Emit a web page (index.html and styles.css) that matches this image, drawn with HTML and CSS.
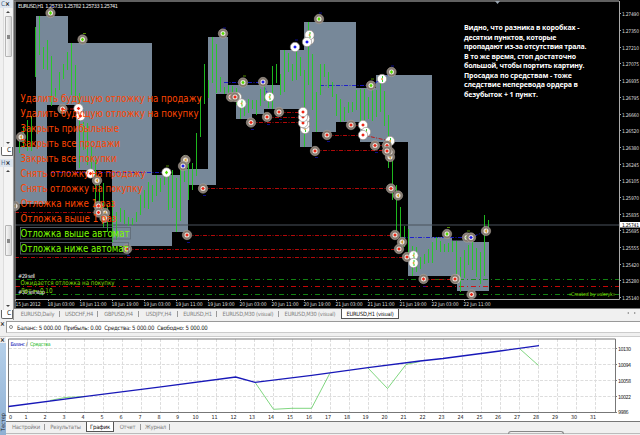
FILE: index.html
```html
<!DOCTYPE html>
<html lang="ru">
<head>
    <meta charset="utf-8">
    <title>EURUSD,H1</title>
    <link rel="stylesheet" href="styles.css">
</head>
<body>
    <div class="workspace">
        <div class="dock">
            <div class="panel panel-top">
                <div class="panel-head"><span>С</span><b>×</b></div>
                <div class="scroll"><i class="up"></i><i class="thumb"></i><i class="down"></i></div>
                <div class="panel-tab">С</div>
            </div>
            <div class="panel panel-bottom">
                <div class="panel-head"><span>Н</span><b>×</b></div>
                <div class="scroll"><i class="up"></i><i class="thumb"></i><i class="down"></i></div>
                <div class="panel-tab">С</div>
            </div>
        </div>

        <div class="charts">
            <svg class="price-chart" viewBox="14 0 626 308">
                <defs>
                    <g id="ring"><circle r="4.7" fill="#857a70" stroke="#b3aaa2" stroke-width=".5"/><circle r="2.5" fill="#e8e2dc"/></g>
                    <g id="disc"><circle r="4.7" fill="#fff" stroke="#887f78" stroke-width=".6"/></g>
                    <g id="g"><use href="#ring"/><path class="dot lime" d="M0-2L1.6 0 0 2-1.6 0z"/></g>
                    <g id="r"><use href="#ring"/><path class="dot red" d="M0-1.8L1.8 0 0 1.8-1.8 0z"/></g>
                    <g id="y"><use href="#ring"/><path class="dot gold" d="M-1.4 0L1-2V2z"/></g>
                    <g id="b"><use href="#ring"/><path class="dot blue" d="M0-1.8L1.8 0 0 1.8-1.8 0z"/></g>
                    <g id="wr"><use href="#disc"/><path class="dot red" d="M0-1.8L1.8 0 0 1.8-1.8 0z"/></g>
                    <g id="wo"><use href="#disc"/><path class="dot gold" d="M-1.2 0L.8-1.8V1.8z"/><path class="bars" d="M.5-3V-1M.5 1V3"/></g>
                    <g id="wb"><use href="#disc"/><path class="dot blue" d="M0-1.8L1.8 0 0 1.8-1.8 0z"/></g>
                    <g id="wg"><use href="#disc"/><path class="dot lime" d="M0-2L1.6 0 0 2-1.6 0z"/></g>
                </defs>

                <rect x="14" y="0" width="626" height="308"/>

                <!-- session boxes -->
                <g class="boxes">
                    <path d="M15 147H36V16H68V43H152V170H76V105H47V204H15z"/>
                    <path d="M112 170H152V175H180V169H208V37H228V85H280V50H304V22H356V88H376V75H432V237H452V240.500H472V242H489V291H457V276H408V142H360V122H336V132H312V147H300V109H264V114H252V119H236V94H216V185H188V232H172V246H112z"/>
                </g>

                <path class="cursor-line" d="M15 225H619"/>
                <path class="level red-level" d="M15 286.500H619"/>
                <path class="level green-level" d="M15 279.500H619M15 294.500H619"/>
                <path class="level trade" d="M15 257.500H407M127 249.500H399M187 235.500H395M203 188.500H391M315 150.500H387M251 122.500H303M267 117.500H303M279 112.500H303M327 135.500H363M351 125.500H363M15 212.500H98M62 109H78M423 279.500H455M363 135L390 141M375 145.500H387"/>
                <path class="level blue-level" d="M51 172.500H166M224 82.500H263L269 97M320 85.500H371L391 73M402 237.500H471L486 231"/>

                <!-- price bars -->
                <path class="bars" d="M35.500 27V77M39.500 16V55M43.500 47V69M47.500 40V70M51.500 56V106M55.500 88V97M59.500 72V90M63.500 64V79M67.500 52V70M71.500 43V95M75.500 65V100M79.500 93V168M83.500 122V150M87.500 123V165M91.500 147V170M95.500 160V205M99.500 180V215M103.500 183V228M107.500 205V232M112.500 200V243M116.500 212V240M120.500 208V222M124.500 210V224M128.500 217V226M132.500 218V225M136.500 212V222M140.500 195V215M144.500 190V208M148.500 182V209M152.500 185V202M156.500 175V196M160.500 178V192M164.500 170V185M168.500 175V210M172.500 170V208M176.500 178V232M180.500 165V221M184.500 155V182M188.500 160V200M192.500 163V190M196.500 133V176M200.500 97V137M204.500 64V104M208.500 80V98M212.500 37V83M216.500 44V93M220.500 77V92M224.500 87V94M228.500 85V94M232.500 86V96M236.500 88V105M240.500 96V119M244.500 102V116M248.500 99V113M252.500 100V109M256.500 100V115M260.500 89V106M264.500 84V101M268.500 93V108M272.500 66V109M276.500 64V83M280.500 74V95M284.500 50V92M288.500 53V72M292.500 64V81M296.500 50V80M300.500 57V76M304.500 70V147M308.500 22V85M312.500 54V110M316.500 92V132M320.500 64V95M324.500 64V77M328.500 72V88M332.500 82V97M336.500 94V116M340.500 99V122M344.500 107V121M348.500 102V113M352.500 102V112M356.500 90V110M360.500 89V122M364.500 89V128M368.500 97V119M372.500 89V121M376.500 90V117M380.500 80V112M384.500 91V126M388.500 115V168M392.500 158V200M396.500 185V235M400.500 207V250M404.500 226V247M408.500 229V260M412.500 246V276M416.500 247V272M420.500 257V269M424.500 254V264M428.500 249V263M432.500 242V263M436.500 237V250M440.500 241V252M444.500 244V252M448.500 243V252M452.500 241V252M456.500 241V279M460.500 257V292M464.500 250V278M468.500 245V265M472.500 241V270M476.500 248V277M480.500 252V284M484.500 215V276M488.500 220V227"/>
                <path class="bars" d="M19.500 133V153M23.500 126V148M27.500 120V151M31.500 116V151"/>

                <!-- order markers -->
                <use href="#g" x="50.500" y="13"/><use href="#g" x="82.500" y="39.500"/>
                <use href="#r" x="62.500" y="109"/><use href="#wr" x="80.500" y="116"/><use href="#wr" x="78.500" y="108.500"/>
                <use href="#y" x="21" y="137"/><use href="#wr" x="90.500" y="173.500"/><use href="#y" x="97" y="180.500"/>
                <use href="#wg" x="166.500" y="172.500"/><use href="#y" x="185.500" y="160"/><use href="#b" x="183" y="166"/>
                <use href="#r" x="203" y="188.500"/><use href="#y" x="15" y="206"/><use href="#y" x="105" y="213"/><use href="#y" x="104.500" y="218"/>
                <use href="#r" x="98.500" y="206"/><use href="#r" x="98.500" y="212.500"/><use href="#r" x="127" y="249"/><use href="#r" x="187" y="235"/>
                <use href="#g" x="223" y="33.500"/><use href="#g" x="243" y="82.500"/><use href="#b" x="263" y="82"/>
                <use href="#wr" x="237" y="97"/><use href="#r" x="231" y="97"/><use href="#r" x="235" y="97"/>
                <use href="#wo" x="241.500" y="103.500"/><use href="#wo" x="269.500" y="97"/>
                <use href="#wb" x="295" y="47"/><use href="#wo" x="309.500" y="40"/><use href="#wo" x="309.500" y="35"/><use href="#wb" x="307" y="42"/>
                <use href="#g" x="319" y="19"/><use href="#g" x="371" y="85.500"/><use href="#wo" x="382" y="79"/><use href="#g" x="391.500" y="72"/>
                <use href="#r" x="279" y="112"/><use href="#r" x="267" y="117"/><use href="#r" x="251" y="122.500"/>
                <use href="#wo" x="305" y="129"/><use href="#wo" x="305" y="124"/><use href="#wo" x="305" y="118.500"/><use href="#wr" x="303" y="123"/><use href="#wr" x="303" y="117"/><use href="#wr" x="303" y="112"/>
                <use href="#r" x="315" y="151"/><use href="#r" x="327" y="135"/><use href="#r" x="351" y="125"/>
                <use href="#wr" x="363" y="125"/><use href="#wo" x="366" y="132"/><use href="#wr" x="363" y="135"/>
                <use href="#r" x="375" y="145.500"/><use href="#wo" x="390" y="141"/><use href="#y" x="390" y="157"/><use href="#y" x="390" y="152"/><use href="#r" x="387" y="145.500"/><use href="#r" x="387" y="151"/>
                <use href="#r" x="391" y="188.500"/><use href="#y" x="398" y="195.500"/>
                <use href="#r" x="395" y="235"/><use href="#y" x="402" y="242"/><use href="#r" x="399" y="249"/><use href="#r" x="407" y="257"/>
                <use href="#wo" x="413.500" y="255.500"/><use href="#wo" x="413.500" y="263"/>
                <use href="#g" x="447" y="234"/><use href="#g" x="467" y="237.500"/><use href="#b" x="471" y="237.500"/><use href="#y" x="486" y="231"/>
                <use href="#r" x="423.500" y="279"/><use href="#wr" x="456" y="279"/><use href="#r" x="455" y="279"/><use href="#r" x="471.500" y="294.500"/>

                <path class="tick-blue" d="M51 6.500h3M223 28h3M319 13h3M295 40h3M391 66h3M203 195.500h3M187 242.500h3M127 255.500h3M251 129.500h3M267 124.500h3M279 119.500h3M315 157.500h3M327 141.500h3M375 152.500h3M423 286.500h3"/>
                <path class="tick-lime" d="M83 33.500h3M243 76h3M447 227.500h3M467 231h3M371 79h3M166 166h3"/>

                <text class="caption" x="18" y="7.500" textLength="100">EURUSD,H1&#160; 1.25733 1.25782 1.25733 1.25741</text>

                <!-- order script buttons -->
                <g class="orders">
                    <text x="20.500" y="101.500" textLength="181" lengthAdjust="spacingAndGlyphs">Удалить будущую отложку на продажу</text>
                    <text x="20.500" y="116.500" textLength="178" lengthAdjust="spacingAndGlyphs">Удалить будущую отложку на покупку</text>
                    <text x="20.500" y="131.500" textLength="98.500" lengthAdjust="spacingAndGlyphs">Закрыть прибыльные</text>
                    <text x="20.500" y="146.500" textLength="99.500" lengthAdjust="spacingAndGlyphs">Закрыть все продажи</text>
                    <text x="20.500" y="161.500" textLength="96" lengthAdjust="spacingAndGlyphs">Закрыть все покупки</text>
                    <text x="20.500" y="176.500" textLength="125" lengthAdjust="spacingAndGlyphs">Снять отложку на продажу</text>
                    <text x="20.500" y="191.500" textLength="122" lengthAdjust="spacingAndGlyphs">Снять отложку на покупку</text>
                    <text x="20.500" y="206.500" textLength="95" lengthAdjust="spacingAndGlyphs">Отложка ниже 1 раз</text>
                    <text x="20.500" y="221.500" textLength="96" lengthAdjust="spacingAndGlyphs">Отложка выше 1 раз</text>
                </g>
                <rect class="frame" x="20.500" y="227.500" width="110" height="11.500"/>
                <rect class="frame" x="20.500" y="242.500" width="108" height="11.500"/>
                <g class="orders active">
                    <text x="20.500" y="236.500" textLength="109" lengthAdjust="spacingAndGlyphs">Отложка выше автомат</text>
                    <text x="20.500" y="251.500" textLength="108" lengthAdjust="spacingAndGlyphs">Отложка ниже автомат</text>
                </g>
                <text class="caption" x="18" y="278" textLength="17">#29 sell</text>
                <text class="caption" x="18" y="293.500" textLength="27">#30 sell stop</text>
                <text class="status" x="20.500" y="285" textLength="94" lengthAdjust="spacingAndGlyphs">Ожидается отложка на покупку</text>
                <text class="status" x="20.500" y="292.500" textLength="32" lengthAdjust="spacingAndGlyphs">Лот = 0.10</text>
                <text class="status author" x="568.500" y="296" textLength="47">«Created by valeryk»</text>

                <g class="note">
                    <text x="464" y="30" textLength="115.500">Видно, что разника в коробках -</text>
                    <text x="464" y="39.600" textLength="92.500">десятки пунктов, которые</text>
                    <text x="464" y="49.200" textLength="122.500">пропадают из-за отсутствия трала.</text>
                    <text x="464" y="58.800" textLength="112">В то же время, стоп достаточно</text>
                    <text x="464" y="68.200" textLength="120.500">большой, чтобы портить картину.</text>
                    <text x="464" y="77.800" textLength="108">Просадка по средствам - тоже</text>
                    <text x="464" y="87.300" textLength="114">следствие неперевода ордера в</text>
                    <text x="464" y="96.800" textLength="74">безубыток + 1 пункт.</text>
                </g>

                <!-- axes -->
                <path class="edge" d="M14 1H619M15 1V308"/>
                <path class="axis" d="M619.500 1V299.500M15 299.500H619.500"/>
                <path class="shift" d="M495 1h5l-2.500 3z"/>
                <path class="axis" d="M619 13.500h2M619 30.500h2M619 47.500h2M619 63.500h2M619 80.500h2M619 97.500h2M619 114.500h2M619 130.500h2M619 147.500h2M619 164.500h2M619 180.500h2M619 197.500h2M619 214.500h2M619 230.500h2M619 247.500h2M619 264.500h2M619 280.500h2M619 297.500h2"/>
                <path class="axis" d="M15.500 299v2M48.500 299v2M80.500 299v2M112.500 299v2M144.500 299v2M176.500 299v2M208.500 299v2M240.500 299v2M272.500 299v2M304.500 299v2M336.500 299v2M368.500 299v2M400.500 299v2M432.500 299v2M464.500 299v2"/>
                <g class="scale">
                    <text x="622" y="15.500" textLength="17">1.27490</text>
                    <text x="622" y="32.500" textLength="17">1.27350</text>
                    <text x="622" y="49.500" textLength="17">1.27210</text>
                    <text x="622" y="66" textLength="17">1.27075</text>
                    <text x="622" y="82.500" textLength="17">1.26935</text>
                    <text x="622" y="99.500" textLength="17">1.26795</text>
                    <text x="622" y="116.500" textLength="17">1.26660</text>
                    <text x="622" y="132.500" textLength="17">1.26520</text>
                    <text x="622" y="149.500" textLength="17">1.26380</text>
                    <text x="622" y="166.500" textLength="17">1.26245</text>
                    <text x="622" y="182.500" textLength="17">1.26105</text>
                    <text x="622" y="199.500" textLength="17">1.25970</text>
                    <text x="622" y="216.500" textLength="17">1.25835</text>
                    <text x="622" y="232.500" textLength="17">1.25695</text>
                    <text x="622" y="249.500" textLength="17">1.25555</text>
                    <text x="622" y="266.500" textLength="17">1.25420</text>
                    <text x="622" y="282.500" textLength="17">1.25280</text>
                    <text x="622" y="299.500" textLength="17">1.25140</text>
                    <rect x="620" y="222" width="20" height="5.500" fill="#fff"/>
                    <text class="current" x="622" y="227" textLength="17">1.25741</text>
                </g>
                <g class="scale">
                    <text x="15.500" y="305.500" textLength="25">15 Jun 2012</text>
                    <text x="47.500" y="305.500" textLength="27">18 Jun 03:00</text>
                    <text x="79.500" y="305.500" textLength="27">18 Jun 11:00</text>
                    <text x="111.500" y="305.500" textLength="27">18 Jun 19:00</text>
                    <text x="143.500" y="305.500" textLength="27">19 Jun 03:00</text>
                    <text x="175.500" y="305.500" textLength="27">19 Jun 11:00</text>
                    <text x="207.500" y="305.500" textLength="27">19 Jun 19:00</text>
                    <text x="239.500" y="305.500" textLength="27">20 Jun 03:00</text>
                    <text x="271.500" y="305.500" textLength="27">20 Jun 11:00</text>
                    <text x="303.500" y="305.500" textLength="27">20 Jun 19:00</text>
                    <text x="335.500" y="305.500" textLength="27">21 Jun 03:00</text>
                    <text x="367.500" y="305.500" textLength="27">21 Jun 11:00</text>
                    <text x="399.500" y="305.500" textLength="27">21 Jun 19:00</text>
                    <text x="431.500" y="305.500" textLength="27">22 Jun 03:00</text>
                    <text x="463.500" y="305.500" textLength="27">22 Jun 11:00</text>
                </g>
            </svg>

            <div class="chart-tabs">
                <span class="tab t1">EURUSD,Daily</span>
                <span class="tab t2">USDCHF,H4</span>
                <span class="tab t3">GBPUSD,H4</span>
                <span class="tab t4">USDJPY,H4</span>
                <span class="tab t5">EURUSD,H1</span>
                <span class="tab t6">EURUSD,M30 (visual)</span>
                <span class="tab t6 last">EURUSD,M30 (visual)</span>
                <span class="tab t7 current">EURUSD,H1 (visual)</span>
                <span class="arrows"><i class="prev"></i><i class="next"></i></span>
            </div>
        </div>
    </div>

    <div class="terminal">
        <b class="close">×</b>
        <div class="balance"><i></i><span>Баланс: 5 000.00&nbsp; Прибыль: 0.00&nbsp; Средства: 5 000.00&nbsp; Свободно: 5 000.00</span></div>
    </div>

    <div class="tester">
        <div class="tester-side"><b class="close">×</b><span>Тестер</span></div>
        <div class="tester-body">
            <svg class="equity-chart" viewBox="6 337 634 84">
                <rect class="plot" x="6" y="337" width="634" height="84"/>
                <path class="grid" d="M27.500 339V412M46.500 339V412M65.500 339V412M84.500 339V412M103.500 339V412M122.500 339V412M141.500 339V412M160.500 339V412M178.500 339V412M197.500 339V412M216.500 339V412M235.500 339V412M254.500 339V412M273.500 339V412M292.500 339V412M311.500 339V412M330.500 339V412M349.500 339V412M368.500 339V412M387.500 339V412M405.500 339V412M424.500 339V412M443.500 339V412M462.500 339V412M481.500 339V412M500.500 339V412M519.500 339V412M538.500 339V412M557.500 339V412M576.500 339V412M595.500 339V412M9 348.500H615M9 364.500H615M9 380.500H615M9 396.500H615"/>
                <path class="plot-frame" d="M8.500 339H615.500V412.500H8.500z"/>
                <path class="plot-tick" d="M615 348.500h2M615 364.500h2M615 380.500h2M615 396.500h2M615 412.500h2"/>
                <path class="equity" d="M50 400.500L65 397.500 84 396.600M255 382.300L273.500 409.300 292 408.300H311.500L330 373M368 368L387.500 388.500 406 364.500 420 361.500M520 349L538.500 365.500"/>
                <path class="balance-line" d="M8.500 406.500L84 396.700 159 387.200 235.700 377 255 382.300 311.700 375.300 368 367.700 420 361 443 358.500 500 351 539 345.700"/>
                <text class="legend-balance" x="10.500" y="345.500" textLength="14.500">Баланс</text>
                <text class="legend" x="26" y="345.500">/</text>
                <text class="legend-equity" x="30" y="345.500" textLength="20.500">Средства</text>
                <g class="legend">
                    <text x="9" y="419">0</text><text x="24.500" y="419">1</text><text x="43.500" y="419">2</text><text x="62.500" y="419">3</text>
                    <text x="81.500" y="419">4</text><text x="100.500" y="419">5</text><text x="119.500" y="419">6</text><text x="138.500" y="419">7</text>
                    <text x="157.500" y="419">8</text><text x="176" y="419">9</text><text x="192.500" y="419">10</text><text x="211.500" y="419">11</text>
                    <text x="230.500" y="419">12</text><text x="249" y="419">13</text><text x="268" y="419">14</text><text x="287" y="419">15</text>
                    <text x="306" y="419">16</text><text x="325" y="419">17</text><text x="344" y="419">18</text><text x="362.500" y="419">19</text>
                    <text x="381.500" y="419">20</text><text x="400.500" y="419">21</text><text x="419.500" y="419">22</text><text x="438.500" y="419">23</text>
                    <text x="457.500" y="419">24</text><text x="476.500" y="419">25</text><text x="495" y="419">26</text><text x="514" y="419">27</text>
                    <text x="533" y="419">28</text><text x="552" y="419">29</text><text x="571" y="419">30</text><text x="590" y="419">31</text>
                    <text x="618" y="350.500" textLength="13">10130</text><text x="618" y="366.500" textLength="13">10094</text>
                    <text x="618" y="382.500" textLength="13">10058</text><text x="618" y="398.500" textLength="13">10022</text>
                    <text x="618" y="414" textLength="10.500">9986</text>
                </g>
            </svg>
            <div class="tester-tabs">
                <span class="tab s1">Настройки</span>
                <span class="tab s2">Результаты</span>
                <span class="tab s3 current">График</span>
                <span class="tab s4">Отчет</span>
                <span class="tab s5">Журнал</span>
                <span class="grip"></span>
            </div>
        </div>
    </div>
</body>
</html>
```

FILE: styles.css
```css
* {
    box-sizing: border-box;
}
body {
    margin: 0;
    width: 640px;
    height: 435px;
    overflow: hidden;
    display: flex;
    flex-direction: column;
    background-color: #f0f0f0;
    font-family: "DejaVu Sans Condensed", "DejaVu Sans", sans-serif;
    font-size: 6.5px;
    color: #222;
}
svg {
    display: block;
}
.workspace {
    display: flex;
    height: 320px;
}

/* left docked panels */
.dock {
    width: 14px;
    display: flex;
    flex-direction: column;
    gap: 3px;
    border-right: 1px solid #999;
    background-color: #f0f0f0;
}
.panel {
    display: flex;
    flex-direction: column;
}
.panel-top {
    height: 156px;
}
.panel-bottom {
    height: 160px;
}
.panel-head {
    height: 8px;
    display: flex;
    justify-content: space-between;
    align-items: center;
    padding: 0 3px 0 1px;
    background-color: #dde5ee;
    line-height: 7px;
    color: #4f6f92;
}
.panel-head b {
    color: #111;
    font-size: 6.5px;
}
.scroll {
    flex: 1;
    width: 9px;
    margin-left: 3px;
    display: flex;
    flex-direction: column;
    align-items: center;
    padding: 3px 0;
    background-color: #f4f4f4;
    border-left: 1px solid #ddd;
}
.up,
.down {
    border: 2px solid transparent;
    border-bottom-color: #444;
    border-top-width: 0;
}
.down {
    margin-top: auto;
    border-bottom-width: 0;
    border-top: 2px solid #444;
}
.thumb {
    width: 7px;
    height: 41px;
    margin-top: 3px;
    border: 1px solid #b5b5b5;
    border-radius: 1px;
    background: linear-gradient(#888, #888) center / 3px 4px no-repeat, linear-gradient(90deg, #f6f6f6, #d5d5d5);
}
.panel-bottom .thumb {
    height: 31px;
    margin-top: 53px;
}
.panel-tab {
    width: 12px;
    height: 9px;
    margin-left: 1px;
    padding-left: 5px;
    line-height: 7px;
    background-color: #fff;
    border: 1px solid #666;
    border-top: 0;
    border-radius: 0 0 1px 2px;
    overflow: hidden;
}

/* price chart */
.charts {
    width: 626px;
}
.price-chart {
    width: 626px;
    height: 308px;
}
.boxes {
    fill: #778899;
}
.bars {
    fill: none;
    stroke: #20cc20;
    stroke-width: .9;
}
.level {
    fill: none;
    stroke-width: .9;
    stroke-dasharray: 4 1.5 1 1.5;
}
.red-level {
    stroke: #d80808;
    stroke-dasharray: 5 3 1 3;
}
.green-level {
    stroke: #149014;
    stroke-dasharray: 5 3 1 3;
}
.trade {
    stroke: #c40a0a;
}
.blue-level {
    stroke: #1515d0;
}
.cursor-line {
    stroke: #4a525c;
    stroke-width: 1.2;
}
.lime {
    fill: #55dd00;
}
.red {
    fill: #ee2211;
}
.gold {
    fill: #d9a030;
}
.blue {
    fill: #1515ee;
}
.tick-blue {
    stroke: #1010c0;
    stroke-width: .7;
}
.tick-lime {
    stroke: #66aa00;
    stroke-width: .8;
}
.caption {
    fill: #eee;
    font-size: 5.6px;
}
.orders {
    fill: #ff4500;
    font-family: "DejaVu Sans", sans-serif;
    font-size: 9.6px;
}
.active {
    fill: #7cfc00;
}
.frame {
    fill: none;
    stroke: #5f6a75;
    stroke-width: .8;
}
.status {
    fill: #7cdc00;
    font-size: 6.6px;
}
.author {
    font-size: 5.2px;
}
.note {
    fill: #fff;
    font-family: "Open Sans", "Noto Sans", sans-serif;
    font-weight: bold;
    font-size: 7px;
}
.edge {
    fill: none;
    stroke: #808080;
    stroke-width: 1.4;
}
.axis {
    fill: none;
    stroke: #aaa;
}
.shift {
    fill: #9aa5b0;
}
.scale {
    fill: #ddd;
    font-size: 5px;
}
.scale .current {
    fill: #000;
}

/* tab strips */
.chart-tabs,
.tester-tabs {
    display: flex;
    color: #808080;
    white-space: nowrap;
}
.chart-tabs {
    height: 12px;
    border-top: 1px solid #777;
    padding-left: 1px;
    font-size: 5.7px;
    letter-spacing: -.2px;
}
.tab {
    flex: none;
    height: 9px;
    line-height: 10px;
    text-align: center;
    background: linear-gradient(#999, #999) right 2px / 1px 6px no-repeat;
}
.tab.last {
    background: none;
}
.tab.current {
    height: 10px;
    color: #111;
    background: #fff;
    border: 1px solid #555;
    border-top: 0;
    line-height: 10px;
}
.t1 { width: 45px; }
.t2 { width: 38px; }
.t3 { width: 41px; }
.t4 { width: 39px; }
.t5 { width: 39px; }
.t6 { width: 62px; }
.t7 { width: 58px; }
.arrows {
    margin-left: auto;
    display: flex;
    gap: 5px;
    padding: 3px 3px 0 0;
}
.prev,
.next {
    width: 0;
    height: 0;
    border: 1.5px solid transparent;
    border-right: 2px solid #888;
}
.next {
    border-right: 1.5px solid transparent;
    border-left: 2px solid #888;
}

/* account line */
.terminal {
    height: 17px;
    display: flex;
    padding-top: 1px;
    border-bottom: 1px solid #ccc;
}
.close {
    width: 6px;
    font-size: 6.5px;
    line-height: 6px;
}
.balance {
    flex: 1;
    height: 12px;
    display: flex;
    align-items: center;
    background-color: #fff;
    border: 1px solid #999;
    border-right: 0;
    border-bottom-color: #ccc;
    padding-left: 2px;
    font-size: 6px;
    letter-spacing: -.25px;
    white-space: nowrap;
}
.balance i {
    width: 4px;
    height: 4px;
    margin-right: 4px;
    border: 1px solid #888;
    border-radius: 50%;
}

/* strategy tester */
.tester {
    height: 98px;
    display: flex;
}
.tester-side {
    width: 6px;
    display: flex;
    flex-direction: column;
    justify-content: space-between;
    padding-bottom: 4px;
    background: linear-gradient(#f0f0f0 6px, #b5d0ea 6px, #8fb0d3);
}
.tester-side span {
    writing-mode: vertical-rl;
    transform: rotate(180deg);
    font-size: 5.6px;
    line-height: 6px;
}
.tester-body {
    width: 634px;
}
.equity-chart {
    width: 634px;
    height: 84px;
}
.plot {
    fill: #fff;
}
.plot-frame {
    fill: none;
    stroke: #777;
}
.plot-tick {
    stroke: #777;
}
.grid {
    stroke: #ddd;
    stroke-dasharray: 3 1.5;
}
.balance-line {
    fill: none;
    stroke: #1818b8;
    stroke-width: 1.3;
}
.equity {
    fill: none;
    stroke: #60cc60;
    stroke-width: .8;
}
.legend {
    fill: #222;
    font-size: 5.4px;
}
.legend-balance {
    fill: #1818b8;
    font-size: 5.2px;
}
.legend-equity {
    fill: #18b818;
    font-size: 5.2px;
}
.tester-tabs {
    height: 13px;
    padding-left: 1px;
    border-top: 1px solid #777;
    border-bottom: 1px solid #bbb;
    font-size: 5.9px;
    letter-spacing: -.2px;
}
.s1 { width: 38px; }
.s2 { width: 41px; background: none; }
.s3 { width: 28px; }
.s4 { width: 27px; }
.s5 { width: 29px; }
.grip {
    width: 56px;
    height: 3px;
    margin: 9px 76px 0 auto;
    border: 1px solid #888;
    border-bottom: 0;
    border-radius: 3px 3px 0 0;
}
```
